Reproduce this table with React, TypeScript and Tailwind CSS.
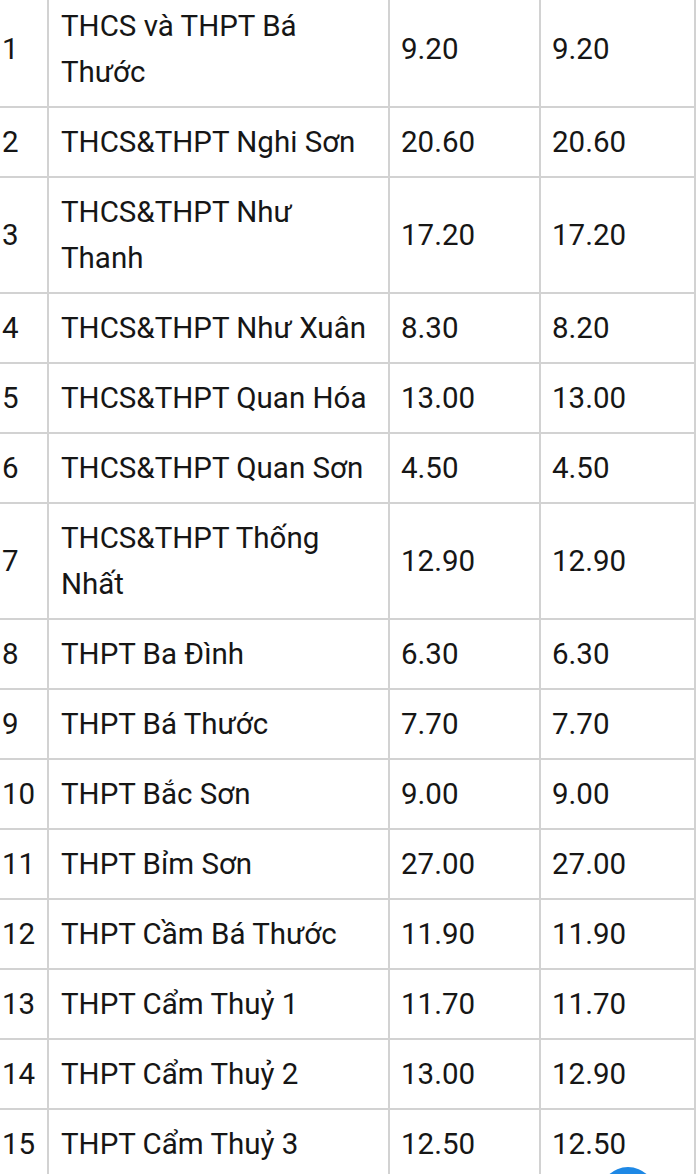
const rows: [string, string, string, string][] = [
  ["1", "THCS và THPT Bá Thước", "9.20", "9.20"],
  ["2", "THCS&THPT Nghi Sơn", "20.60", "20.60"],
  ["3", "THCS&THPT Như Thanh", "17.20", "17.20"],
  ["4", "THCS&THPT Như Xuân", "8.30", "8.20"],
  ["5", "THCS&THPT Quan Hóa", "13.00", "13.00"],
  ["6", "THCS&THPT Quan Sơn", "4.50", "4.50"],
  ["7", "THCS&THPT Thống Nhất", "12.90", "12.90"],
  ["8", "THPT Ba Đình", "6.30", "6.30"],
  ["9", "THPT Bá Thước", "7.70", "7.70"],
  ["10", "THPT Bắc Sơn", "9.00", "9.00"],
  ["11", "THPT Bỉm Sơn", "27.00", "27.00"],
  ["12", "THPT Cầm Bá Thước", "11.90", "11.90"],
  ["13", "THPT Cẩm Thuỷ 1", "11.70", "11.70"],
  ["14", "THPT Cẩm Thuỷ 2", "13.00", "12.90"],
  ["15", "THPT Cẩm Thuỷ 3", "12.50", "12.50"],
]

export default function App() {
  return (
    <div className="relative h-[1174px] w-[700px] overflow-hidden bg-white font-['Roboto',sans-serif] text-[29.5px] leading-[46px] text-[#161616]">
      <table className="-ml-[12px] -mt-[10px] w-[706px] table-fixed border-collapse">
        <colgroup>
          <col className="w-[59px]" />
          <col className="w-[341px]" />
          <col className="w-[151px]" />
          <col className="w-[155px]" />
        </colgroup>
        <tbody>
          {rows.map(([no, name, a, b]) => (
            <tr key={no}>
              <td className="border-2 border-[#d2d2d2] py-[11px] pl-[12px] pr-0 align-middle">{no}</td>
              <td className="border-2 border-[#d2d2d2] py-[11px] pl-[12px] pr-[16px] align-middle">{name}</td>
              <td className="border-2 border-[#d2d2d2] py-[11px] pl-[11px] align-middle">{a}</td>
              <td className="border-2 border-[#d2d2d2] py-[11px] pl-[11px] align-middle">{b}</td>
            </tr>
          ))}
        </tbody>
      </table>
      <div className="absolute left-[600px] top-[1167px] h-[56px] w-[56px] rounded-full bg-[#1e88e5]" />
    </div>
  )
}
